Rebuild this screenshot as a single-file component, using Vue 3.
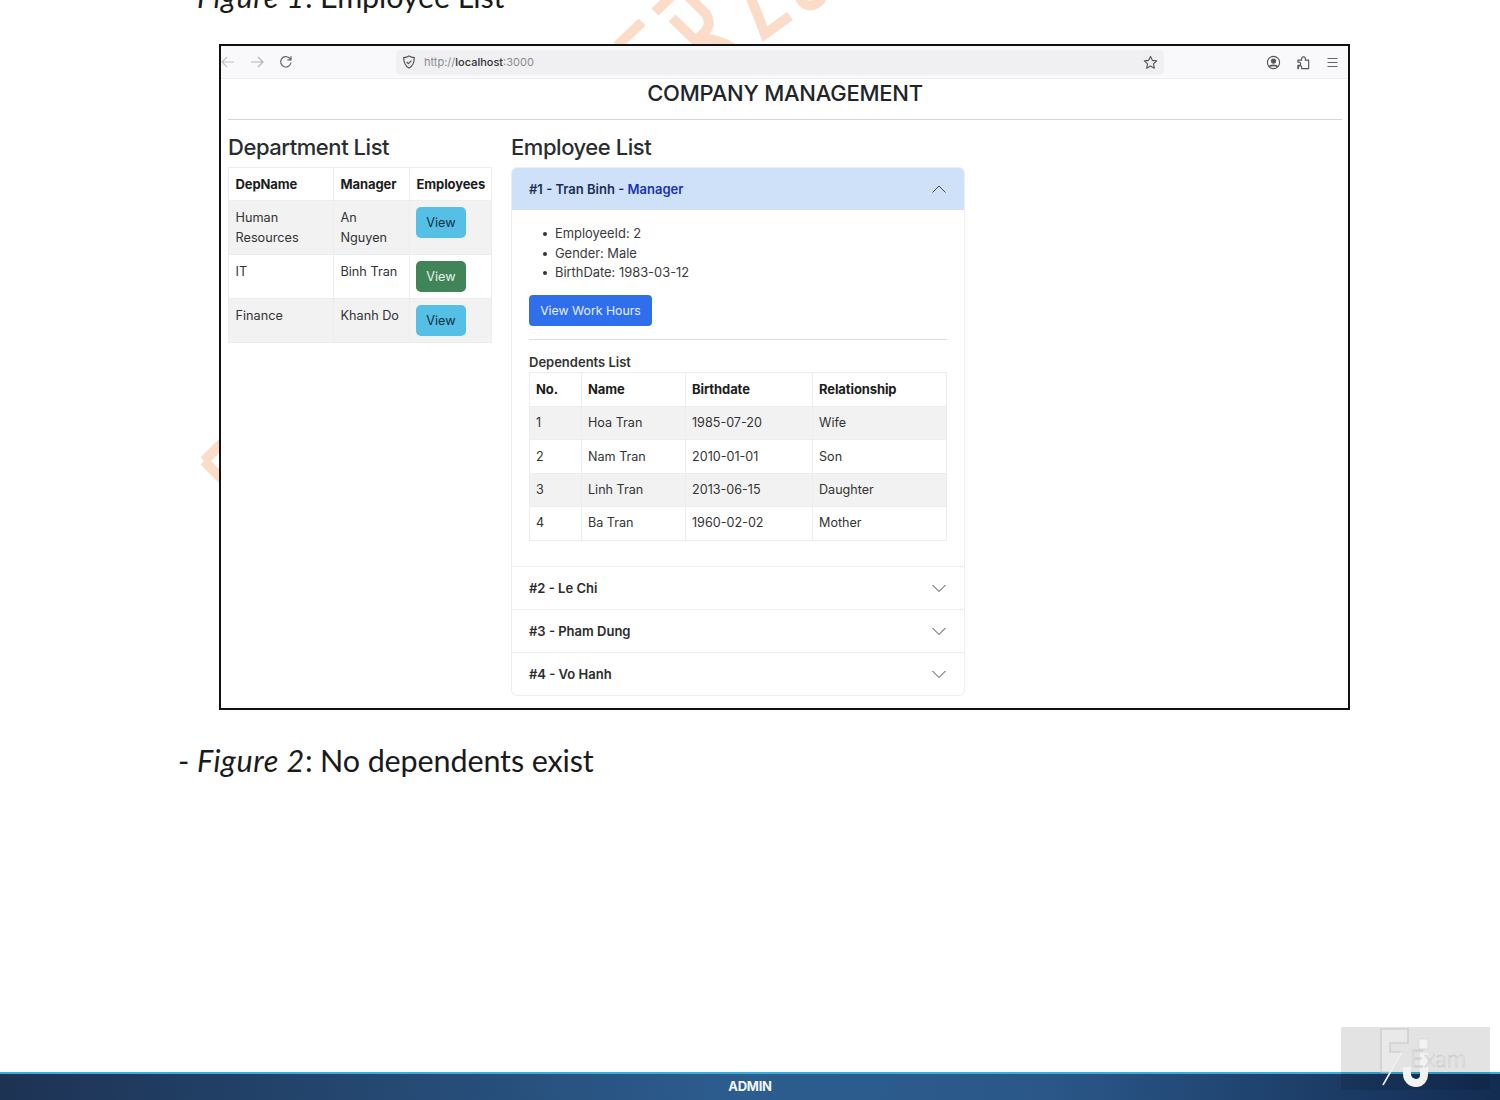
<script setup>
import { ref } from "vue";

const departments = [
  { name: "Human Resources", manager: "An Nguyen", active: false },
  { name: "IT", manager: "Binh Tran", active: true },
  { name: "Finance", manager: "Khanh Do", active: false },
];

const dependents = [
  { no: 1, name: "Hoa Tran", birth: "1985-07-20", rel: "Wife" },
  { no: 2, name: "Nam Tran", birth: "2010-01-01", rel: "Son" },
  { no: 3, name: "Linh Tran", birth: "2013-06-15", rel: "Daughter" },
  { no: 4, name: "Ba Tran", birth: "1960-02-02", rel: "Mother" },
];

const others = ref(["#2 - Le Chi", "#3 - Pham Dung", "#4 - Vo Hanh"]);
</script>

<template>
  <div class="page">
    <!-- watermark behind the document -->
    <svg class="watermark" width="1500" height="600" viewBox="0 0 1500 600" fill="none" stroke="#fbdcc8" stroke-width="10">
      <path d="M204 461 L224 441 M204 461 L224 481" />
      <path d="M617 46 L642 22" />
      <path d="M655 12 L680 -12 L706 14 C712 24 708 32 695 40 L672 18 M695 40 C708 36 725 42 735 50" />
      <path d="M748 -10 L765 34 L790 16" />
      <path d="M800 -2 C805 8 815 8 822 -2" />
    </svg>

    <p class="caption first">- <em>Figure 1</em>: Employee List</p>

    <div class="browser">
      <div class="toolbar">
        <div class="nav">
          <svg width="14" height="14" viewBox="0 0 14 14" fill="none" stroke="#c4c4c8" stroke-width="1.2"><path d="M13 7H1M6 2 1 7l5 5" /></svg>
          <svg width="14" height="14" viewBox="0 0 14 14" fill="none" stroke="#b4b4b8" stroke-width="1.2"><path d="M1 7h12M8 2l5 5-5 5" /></svg>
          <svg width="14" height="14" viewBox="0 0 14 14" fill="none" stroke="#666" stroke-width="1.2"><path d="M12 7.5A5.2 5.2 0 1 1 10.4 3L12 4.6M12 1.2v3.6H8.4" /></svg>
        </div>
        <div class="address">
          <svg width="14" height="14" viewBox="0 0 14 14" fill="none" stroke="#555" stroke-width="1.2"><path d="M7 1c1.6 1 3.4 1.5 5.3 1.6C12.300 7.600 10.500 11.400 7 13 3.500 11.400 1.700 7.600 1.700 2.600 3.600 2.500 5.400 2 7 1Z" /><path d="m4.700 7 1.700 1.700 3-3" /></svg>
          <span class="url">http://<b>localhost</b>:3000</span>
          <svg class="star" width="15" height="15" viewBox="0 0 16 16" fill="none" stroke="#555" stroke-width="1.2" stroke-linejoin="round"><path d="m8 1.500 2 4.200 4.600.6-3.400 3.200.9 4.600L8 11.800l-4.100 2.300.9-4.600L1.400 6.300 6 5.700Z" /></svg>
        </div>
        <div class="tools">
          <svg width="15" height="15" viewBox="0 0 16 16" fill="none" stroke="#555" stroke-width="1.2"><circle cx="8" cy="8" r="6.500" /><circle cx="8" cy="6.500" r="2.200" fill="#555" /><path d="M3.500 12.500C5 10.500 11 10.500 12.500 12.500" stroke-width="2" /></svg>
          <svg width="15" height="15" viewBox="0 0 16 16" fill="none" stroke="#555" stroke-width="1.2" stroke-linejoin="round"><path d="M2 5.500h4V4a2 2 0 1 1 4 0v1.500h3.500v9H6V13a1.700 1.700 0 1 0-3.400 0v1.500H2V11h1.300a1.700 1.700 0 0 0 0-3.400H2Z" /></svg>
          <svg width="13" height="13" viewBox="0 0 13 13" stroke="#666" stroke-width="1.200"><path d="M1.500 2.500h10M1.500 6.500h10M1.500 10.500h10" /></svg>
        </div>
      </div>

      <div class="content">
        <h1>COMPANY MANAGEMENT</h1>
        <hr class="rule" />

        <div class="columns">
          <section class="dep-col">
            <h2>Department List</h2>
            <table class="grid dep-table">
              <colgroup>
                <col style="width: 105px" />
                <col style="width: 76px" />
                <col style="width: 82px" />
              </colgroup>
              <thead>
                <tr><th>DepName</th><th>Manager</th><th>Employees</th></tr>
              </thead>
              <tbody>
                <tr v-for="d in departments" :key="d.name">
                  <td>{{ d.name }}</td>
                  <td>{{ d.manager }}</td>
                  <td class="btn-cell"><button class="view" :class="{ active: d.active }">View</button></td>
                </tr>
              </tbody>
            </table>
          </section>

          <section class="emp-col">
            <h2>Employee List</h2>
            <div class="accordion">
              <div class="acc-head open">
                <span>#1 - Tran Binh - <span class="role">Manager</span></span>
                <svg width="16" height="16" viewBox="0 0 16 16" fill="none" stroke="#444" stroke-width="1"><path d="m1.500 11.500 6.500-6.500 6.500 6.500" /></svg>
              </div>
              <div class="acc-body">
                <ul>
                  <li>EmployeeId: 2</li>
                  <li>Gender: Male</li>
                  <li>BirthDate: 1983-03-12</li>
                </ul>
                <button class="hours">View Work Hours</button>
                <hr class="inner-rule" />
                <h6>Dependents List</h6>
                <table class="grid dep-list">
                  <colgroup>
                    <col style="width: 52px" />
                    <col style="width: 104px" />
                    <col style="width: 127px" />
                    <col style="width: 134px" />
                  </colgroup>
                  <thead>
                    <tr><th>No.</th><th>Name</th><th>Birthdate</th><th>Relationship</th></tr>
                  </thead>
                  <tbody>
                    <tr v-for="p in dependents" :key="p.no">
                      <td>{{ p.no }}</td>
                      <td>{{ p.name }}</td>
                      <td>{{ p.birth }}</td>
                      <td>{{ p.rel }}</td>
                    </tr>
                  </tbody>
                </table>
              </div>
              <div v-for="o in others" :key="o" class="acc-head">
                <span>{{ o }}</span>
                <svg width="16" height="16" viewBox="0 0 16 16" fill="none" stroke="#444" stroke-width="1"><path d="m1.500 5 6.500 6.500 6.500-6.500" /></svg>
              </div>
            </div>
          </section>
        </div>
      </div>
    </div>

    <p class="caption second">- <em>Figure 2</em>: No dependents exist</p>

    <footer class="footer">ADMIN</footer>

    <div class="logo">
      <svg width="100" height="62" viewBox="0 0 100 62" fill="none">
        <path d="M1 1h27v14H10v9h12L3 57l7-13H1Z" stroke="#c8c8c8" fill="#e9e9e9" stroke-width="1.200" />
        <path d="M22 24 3 57" stroke="#f6f6f6" stroke-width="1.500" />
        <path d="M27 39v7a9 9 0 0 0 9 9h1a8 8 0 0 0 7-8V25" stroke="#f2f2f2" stroke-width="8" />
        <rect x="39" y="11" width="9" height="10" fill="#f2f2f2" stroke="#cfcfcf" stroke-width="0.600" />
      </svg>
      <span class="exam">Exam</span>
    </div>
  </div>
</template>

<style scoped>
.page {
  position: relative;
  display: flex;
  flex-direction: column;
  width: 1500px;
  height: 1100px;
  overflow: hidden;
  background: #fff;
  font-family: Inter, "Liberation Sans", sans-serif;
  color: #212529;
}

.watermark {
  position: absolute;
  left: 0;
  top: 0;
}

.caption {
  position: relative;
  margin: 0 0 0 178px;
  font-family: Lato, "Liberation Sans", sans-serif;
  font-size: 30.500px;
  line-height: 38px;
  letter-spacing: -0.12px;
  color: #1a1a1a;
}

.caption em {
  letter-spacing: 0.6px;
}

.first {
  margin-top: -23px;
  height: 67px;
}

.second {
  margin-top: 31px;
}

.browser {
  position: relative;
  box-sizing: border-box;
  width: 1131px;
  height: 666px;
  margin-left: 219px;
  border: 2px solid #111;
  background: #fff;
}

.toolbar {
  display: flex;
  align-items: center;
  height: 32px;
  background: #f9f9fb;
  border-bottom: 1px solid #eeeeef;
}

.nav {
  display: flex;
  gap: 15px;
  width: 175px;
}

.address {
  display: flex;
  align-items: center;
  box-sizing: border-box;
  width: 768px;
  height: 25px;
  padding: 0 6px;
  border-radius: 5px;
  background: #f0f0f3;
}

.url {
  margin-left: 8px;
  font-size: 11px;
  color: #8a8a8e;
}

.url b {
  font-weight: 500;
  color: #333;
}

.star {
  margin-left: auto;
}

.tools {
  display: flex;
  align-items: center;
  gap: 15px;
  margin-left: 102px;
}

.content {
  padding: 0 6px 0 7px;
}

h1 {
  margin: 0;
  font-size: 22px;
  font-weight: 500;
  line-height: 28px;
  letter-spacing: -0.25px;
  text-align: center;
}

.rule {
  margin: 12px 0 0;
  border: 0;
  border-top: 1px solid #d5d5d5;
}

.columns {
  display: flex;
  margin-top: 13px;
}

.dep-col {
  width: 283px;
}

.emp-col {
  width: 454px;
}

h2 {
  margin: 0 0 5px;
  font-size: 22px;
  font-weight: 500;
  line-height: 29px;
  letter-spacing: -0.45px;
  color: #2a2d30;
}

.grid {
  border-collapse: collapse;
  table-layout: fixed;
  font-size: 12.700px;
  line-height: 20px;
  color: #333;
}

.grid th,
.grid td {
  padding: 6.500px 6.500px;
  border: 1px solid #eceded;
  text-align: left;
  vertical-align: top;
}

.grid th {
  padding-top: 6px;
  padding-bottom: 6px;
  font-size: 13px;
  font-weight: 700;
  color: #1c1c1c;
  letter-spacing: -0.1px;
}

.grid td.btn-cell {
  padding: 6px;
}

.grid tbody tr:nth-child(odd) td {
  background: #f2f2f2;
}

.dep-table {
  width: 263px;
}

.view {
  display: block;
  width: 50px;
  height: 31px;
  margin: 0;
  padding: 0;
  border: 0;
  border-radius: 5px;
  background: #55bfe6;
  color: #10303f;
  font: 12.700px Inter, "Liberation Sans", sans-serif;
}

.view.active {
  background: #42845a;
  color: #e4f3e8;
}

.accordion {
  border: 1px solid #eeeeee;
  border-radius: 6px;
  overflow: hidden;
}

.acc-head {
  display: flex;
  align-items: center;
  justify-content: space-between;
  height: 42px;
  padding: 0 17.500px 0 17px;
  border-top: 1px solid #eeeeee;
  font-size: 13px;
  font-weight: 600;
  color: #2b2b2b;
}

.acc-head.open {
  border-top: 0;
  background: #cfe0f9;
  color: #1c2f55;
}

.role {
  color: #1a33b5;
}

.acc-body {
  padding: 14px 17px 25px;
}

ul {
  margin: 0;
  padding: 0 0 0 26px;
  list-style: none;
  font-size: 12.900px;
  line-height: 19.500px;
  color: #3a3a3a;
}

li::before {
  content: "";
  display: inline-block;
  width: 4px;
  height: 4px;
  margin: 0 8px 0 -12px;
  border-radius: 50%;
  background: #333;
  vertical-align: middle;
}

.hours {
  display: block;
  width: 123px;
  height: 31px;
  margin-top: 12px;
  padding: 0;
  border: 0;
  border-radius: 4px;
  background: #2f6fec;
  color: #e6eefc;
  font: 12.300px Inter, "Liberation Sans", sans-serif;
}

.inner-rule {
  width: 418px;
  margin: 13px 0 0;
  border: 0;
  border-top: 1px solid #dcdcdc;
}

h6 {
  margin: 14px 0 2px;
  font-size: 13px;
  font-weight: 600;
  line-height: 16px;
  color: #333;
}

.dep-list {
  width: 417px;
  font-size: 12.600px;
}

.dep-list th,
.dep-list td {
  height: 33.400px;
  box-sizing: border-box;
  padding: 6px;
  vertical-align: middle;
}

.dep-list th {
  height: 34.500px;
}

.footer {
  position: absolute;
  left: 0;
  right: 0;
  bottom: 0;
  box-sizing: border-box;
  height: 28px;
  border-top: 2px solid #35b0dc;
  background: linear-gradient(90deg, #1d3354 0%, #2c5d8f 50%, #2a5788 70%, #132c52 100%);
  color: #f2f6fa;
  font-size: 13px;
  font-weight: 700;
  line-height: 24px;
  letter-spacing: -0.3px;
  text-align: center;
}

.logo {
  position: absolute;
  left: 1341px;
  top: 1027px;
  width: 149px;
  height: 63px;
  padding: 1px 0 0 39px;
  box-sizing: border-box;
  background: rgba(0, 0, 0, 0.11);
}

.exam {
  position: absolute;
  left: 69px;
  top: 16px;
  color: #f4f4f4;
  font-family: Lato, sans-serif;
  font-size: 24px;
  font-weight: 300;
  -webkit-text-stroke: 0.4px #b8b8b8;
}
</style>

<style>
html,
body {
  margin: 0;
  background: #fff;
}
</style>
